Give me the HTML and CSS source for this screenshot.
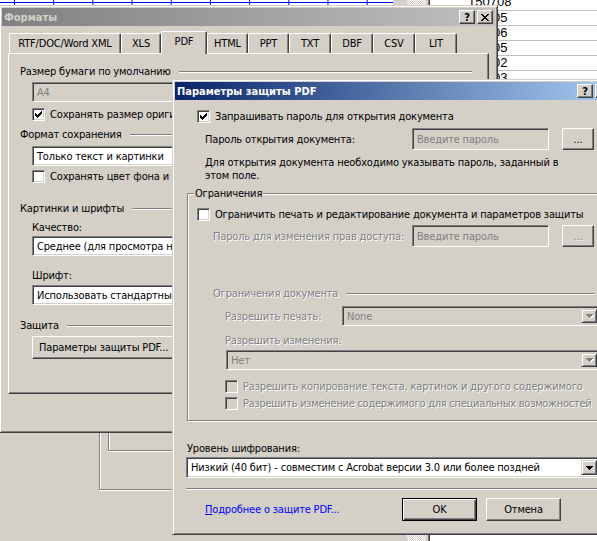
FILE: index.html
```html
<!DOCTYPE html>
<html lang="ru">
<head>
<meta charset="utf-8">
<title>Параметры защиты PDF</title>
<link rel="stylesheet" href="styles.css">
</head>
<body>
<div class="desktop">
  <div class="app">
    <div class="app-left">
      <div class="grid-strip"></div>
      <div class="frame-outer"><div class="frame-inner"></div></div>
    </div>
    <div class="app-gap"></div>
    <div class="app-dither"></div>
    <div class="app-split"></div>
    <div class="app-right">
      <div class="row row-first"><span class="cell-top">150708</span></div>
      <div class="row"><span class="cell">05</span></div>
      <div class="row"><span class="cell">06</span></div>
      <div class="row"><span class="cell">05</span></div>
      <div class="row"><span class="cell">02</span></div>
      <div class="row"><span class="cell">03</span></div>
      <div class="row"><span class="cell">04</span></div>
    </div>
  </div>

  <div class="window formats">
    <div class="titlebar inactive">
      <span class="title">Форматы</span>
      <span class="tbtn">?</span>
      <span class="tbtn"><svg width="8" height="7" viewBox="0 0 8 7"><path d="M0 0h2v1H0z M6 0h2v1H6z M1 1h2v1H1z M5 1h2v1H5z M2 2h4v1H2z M3 3h2v1H3z M2 4h4v1H2z M1 5h2v1H1z M5 5h2v1H5z M0 6h2v1H0z M6 6h2v1H6z" fill="#000"/></svg></span>
    </div>
    <div class="tabs">
      <div class="tab t-rtf">RTF/DOC/Word XML</div>
      <div class="tab t-xls">XLS</div>
      <div class="tab sel t-pdf">PDF</div>
      <div class="tab t-html">HTML</div>
      <div class="tab t-ppt">PPT</div>
      <div class="tab t-txt">TXT</div>
      <div class="tab t-dbf">DBF</div>
      <div class="tab t-csv">CSV</div>
      <div class="tab t-lit">LIT</div>
    </div>
    <div class="tabpanel">
      <div class="grp-h g1"><span>Размер бумаги по умолчанию</span><i class="etch"></i></div>
      <div class="field combo disabled fmt-field f-a4"><span class="ftext ph">A4</span><span class="dd dis-dd"><svg width="7" height="4" viewBox="0 0 7 4"><path d="M0 0h7v1H0z M1 1h5v1H1z M2 2h3v1H2z M3 3h1v1H3z"/></svg></span></div>
      <div class="chk f-r1"><span class="cb"><svg width="9" height="9" viewBox="0 0 9 9"><path d="M1 3h1v3H1z M2 4h1v3H2z M3 5h1v3H3z M4 4h1v3H4z M5 3h1v3H5z M6 2h1v3H6z M7 1h1v3H7z" fill="#000"/></svg></span><span>Сохранять размер оригинала страницы</span></div>
      <div class="grp-h g2"><span>Формат сохранения</span><i class="etch"></i></div>
      <div class="field combo white fmt-field f-fmt"><span class="ftext">Только текст и картинки</span><span class="dd"><svg width="7" height="4" viewBox="0 0 7 4"><path d="M0 0h7v1H0z M1 1h5v1H1z M2 2h3v1H2z M3 3h1v1H3z"/></svg></span></div>
      <div class="chk f-r2"><span class="cb"></span><span>Сохранять цвет фона и текста</span></div>
      <div class="grp-h g3"><span>Картинки и шрифты</span><i class="etch"></i></div>
      <div class="lbl f-lq">Качество:</div>
      <div class="field combo white fmt-field f-q"><span class="ftext">Среднее (для просмотра на экране)</span><span class="dd"><svg width="7" height="4" viewBox="0 0 7 4"><path d="M0 0h7v1H0z M1 1h5v1H1z M2 2h3v1H2z M3 3h1v1H3z"/></svg></span></div>
      <div class="lbl f-lf">Шрифт:</div>
      <div class="field combo white fmt-field f-f"><span class="ftext">Использовать стандартные шрифты</span><span class="dd"><svg width="7" height="4" viewBox="0 0 7 4"><path d="M0 0h7v1H0z M1 1h5v1H1z M2 2h3v1H2z M3 3h1v1H3z"/></svg></span></div>
      <div class="grp-h g4"><span>Защита</span><i class="etch"></i></div>
      <div class="btn f-prot">Параметры защиты PDF...</div>
    </div>
  </div>

  <div class="window pdfdlg">
    <div class="titlebar active">
      <span class="title">Параметры защиты PDF</span>
      <span class="tbtn">?</span>
      <span class="tbtn"><svg width="8" height="7" viewBox="0 0 8 7"><path d="M0 0h2v1H0z M6 0h2v1H6z M1 1h2v1H1z M5 1h2v1H5z M2 2h4v1H2z M3 3h2v1H3z M2 4h4v1H2z M1 5h2v1H1z M5 5h2v1H5z M0 6h2v1H0z M6 6h2v1H6z" fill="#000"/></svg></span>
    </div>
    <div class="chk p-ask"><span class="cb"><svg width="9" height="9" viewBox="0 0 9 9"><path d="M1 3h1v3H1z M2 4h1v3H2z M3 5h1v3H3z M4 4h1v3H4z M5 3h1v3H5z M6 2h1v3H6z M7 1h1v3H7z" fill="#000"/></svg></span><span>Запрашивать пароль для открытия документа</span></div>
    <div class="pw-row p-row1">
      <span class="pw-label">Пароль открытия документа:</span>
      <span class="field pw-field"><span class="ftext ph">Введите пароль</span></span>
      <span class="btn pw-btn">...</span>
    </div>
    <p class="p-note">Для открытия документа необходимо указывать пароль, заданный в<br>этом поле.</p>
    <fieldset class="p-grp">
      <legend>Ограничения</legend>
      <div class="chk g-cb"><span class="cb"></span><span>Ограничить печать и редактирование документа и параметров защиты</span></div>
      <div class="pw-row g-row2">
        <span class="pw-label dis">Пароль для изменения прав доступа:</span>
        <span class="field pw-field"><span class="ftext ph">Введите пароль</span></span>
        <span class="btn pw-btn dis">...</span>
      </div>
      <div class="grp-h g-doc"><span class="dis">Ограничения документа</span><i class="etch"></i></div>
      <div class="sel-row g-print">
        <span class="dis sel-label">Разрешить печать:</span>
        <span class="field combo disabled g-print-sel"><span class="ftext ph">None</span><span class="dd dis-dd"><svg width="7" height="4" viewBox="0 0 7 4"><path d="M0 0h7v1H0z M1 1h5v1H1z M2 2h3v1H2z M3 3h1v1H3z"/></svg></span></span>
      </div>
      <div class="lbl dis g-chg">Разрешить изменения:</div>
      <div class="field combo disabled g-chg-sel"><span class="ftext ph">Нет</span><span class="dd dis-dd"><svg width="7" height="4" viewBox="0 0 7 4"><path d="M0 0h7v1H0z M1 1h5v1H1z M2 2h3v1H2z M3 3h1v1H3z"/></svg></span></div>
      <div class="chk g-cb3"><span class="cb cb-dis"></span><span class="dis">Разрешить копирование текста, картинок и другого содержимого</span></div>
      <div class="chk g-cb4"><span class="cb cb-dis"></span><span class="dis tight">Разрешить изменение содержимого для специальных возможностей</span></div>
    </fieldset>
    <div class="lbl p-enc-lbl">Уровень шифрования:</div>
    <div class="field combo white p-enc"><span class="ftext">Низкий (40 бит) - совместим с Acrobat версии 3.0 или более поздней</span><span class="dd"><svg width="7" height="4" viewBox="0 0 7 4"><path d="M0 0h7v1H0z M1 1h5v1H1z M2 2h3v1H2z M3 3h1v1H3z"/></svg></span></div>
    <div class="etch p-sep"></div>
    <div class="p-bottom">
      <a class="p-link" href="#"><u>П</u>одробнее о защите PDF...</a>
      <span class="btn default">OK</span>
      <span class="btn">Отмена</span>
    </div>
  </div>
</div>
</body>
</html>
```

FILE: styles.css
```css
* { box-sizing: border-box; }
html, body { margin: 0; padding: 0; }
body {
  width: 597px;
  height: 541px;
  overflow: hidden;
  background: #d4d0c8;
  font-family: "DejaVu Sans Condensed", "DejaVu Sans", sans-serif;
  font-stretch: condensed;
  font-size: 11px;
  line-height: 13px;
  letter-spacing: -0.17px;
  color: #000;
}
.desktop {
  position: relative;
  width: 597px;
  height: 541px;
  overflow: hidden;
  background: #d4d0c8;
}

/* background application */
.app {
  position: absolute;
  left: 0; top: 0;
  width: 597px; height: 541px;
  display: flex;
}
.app-left { width: 393px; display: flex; flex-direction: column; }
.grid-strip {
  height: 5px;
  background-color: #fff;
  background-image:
    linear-gradient(#0000ff, #0000ff),
    linear-gradient(to right, #0000ff 1px, transparent 1px);
  background-size: 100% 1px, 39.2px 100%;
  background-position: 0 2px, 14px 0;
  background-repeat: no-repeat, repeat-x;
}
.frame-outer {
  margin-top: 415px;
  margin-left: 99px;
  height: 70px;
  border-left: 1px solid #808080;
  border-bottom: 1px solid #808080;
  box-shadow: inset 1px 0 #fff, 0 1px #fff;
  padding-left: 8px;
}
.frame-inner {
  height: 31px;
  border-left: 1px solid #808080;
  border-bottom: 1px solid #808080;
  box-shadow: inset 1px 0 #fff, 0 1px #fff;
}
.app-gap { width: 14px; background: #d4d0c8; }
.app-dither {
  width: 19px;
  background-color: #d4d0c8;
  background-image: conic-gradient(#fff 25%, transparent 0 50%, #fff 0 75%, transparent 0);
  background-size: 2px 2px;
}
.app-split { width: 4px; border-left: 2px solid #d4d0c8; border-right: 1px solid #404040; background: #808080; }
.app-right { flex: 1; background: #fff; display: flex; flex-direction: column; font-family: "Liberation Sans", sans-serif; font-size: 13px; letter-spacing: 0; }
.row { height: 15px; border-bottom: 1px solid #c0c0c0; line-height: 14px; padding-left: 63px; }
.row-first { height: 11px; line-height: 3px; padding-left: 38px; }

/* windows */
.window {
  position: absolute;
  background: #d4d0c8;
  border: 1px solid;
  border-color: #d4d0c8 #404040 #404040 #d4d0c8;
  box-shadow: inset 1px 1px #fff, inset -1px -1px #808080;
  padding: 2px;
  display: flex;
  flex-direction: column;
}
.formats { left: -1px; top: 5px; width: 499px; height: 428px; }
.pdfdlg { left: 172px; top: 79px; width: 444px; height: 456px; }

.titlebar {
  height: 18px;
  flex: none;
  display: flex;
  align-items: center;
  padding: 0 2px;
  font-weight: bold;
  letter-spacing: 0;
}
.titlebar.inactive { background: linear-gradient(to right, #808080, #c0c0c0); color: #d4d0c8; }
.titlebar.active { background: linear-gradient(to right, #0a246a, #a6caf0); color: #fff; }
.title { flex: 1; white-space: nowrap; }
.tbtn {
  width: 16px; height: 14px;
  display: flex; align-items: center; justify-content: center;
  color: #000;
  font-family: "DejaVu Sans", sans-serif;
  font-size: 11px;
  font-weight: bold;
  background: #d4d0c8;
  border: 1px solid;
  border-color: #fff #404040 #404040 #fff;
  box-shadow: inset -1px -1px #808080;
}
.tbtn + .tbtn { margin-left: 2px; }

/* generic controls */
.etch { display: block; height: 2px; border-top: 1px solid #808080; border-bottom: 1px solid #fff; }
.grp-h { display: flex; align-items: center; height: 13px; white-space: nowrap; }
.grp-h .etch { flex: 1; margin-left: 8px; }
.dis { color: #808080; text-shadow: 1px 1px 0 #fff; }
.tight { letter-spacing: -0.27px; }

.field {
  display: flex;
  align-items: center;
  height: 22px;
  background: #d4d0c8;
  border: 1px solid;
  border-color: #808080 #fff #fff #808080;
  box-shadow: inset 1px 1px #404040, inset -1px -1px #d4d0c8;
  padding: 2px;
  white-space: nowrap;
  overflow: hidden;
}
.field.white { background: #fff; }
.ftext { flex: 1; padding-left: 2px; overflow: hidden; }
.ph { color: #808080; }
.dd {
  width: 16px;
  align-self: stretch;
  display: flex; align-items: center; justify-content: center;
  background: #d4d0c8;
  border: 1px solid;
  border-color: #d4d0c8 #404040 #404040 #d4d0c8;
  box-shadow: inset 1px 1px #fff, inset -1px -1px #808080;
}
.dd svg { display: block; fill: #000; }
.dis-dd svg { fill: #808080; filter: drop-shadow(1px 1px 0 #fff); }

.chk { display: flex; align-items: center; height: 13px; white-space: nowrap; }
.cb {
  flex: none;
  width: 13px; height: 13px;
  margin-right: 5px;
  background: #fff;
  border: 1px solid;
  border-color: #808080 #fff #fff #808080;
  box-shadow: inset 1px 1px #404040, inset -1px -1px #d4d0c8;
  padding: 1px;
}
.cb svg { display: block; }
.cb-dis { background: #d4d0c8; }

.btn {
  display: flex; align-items: center; justify-content: center;
  background: #d4d0c8;
  border: 1px solid;
  border-color: #fff #404040 #404040 #fff;
  box-shadow: inset -1px -1px #808080;
  white-space: nowrap;
}
.btn.default {
  border-color: #000;
  box-shadow: inset 1px 1px #fff, inset -1px -1px #404040, inset -2px -2px #808080;
}
.lbl { white-space: nowrap; }

/* Formats window */
.tabs {
  display: flex;
  align-items: flex-end;
  height: 22px;
  margin: 5px 6px 0;
  padding-left: 1px;
  position: relative;
  z-index: 1;
  flex: none;
}
.tab {
  height: 20px;
  padding-top: 3px;
  text-align: center;
  white-space: nowrap;
  background: #d4d0c8;
  border-top: 1px solid #fff;
  border-left: 1px solid #fff;
  border-right: 1px solid #404040;
  box-shadow: inset -1px 0 #808080;
  border-radius: 2px 2px 0 0;
}
.tab.sel { height: 23px; margin-bottom: -1px; padding-top: 3px; }
.t-rtf { width: 112px; }
.t-xls { width: 40px; }
.t-pdf { width: 46px; }
.t-html { width: 41px; }
.t-ppt { width: 41px; }
.t-txt { width: 42px; }
.t-dbf { width: 42px; }
.t-csv { width: 42px; }
.t-lit { width: 42px; }

.tabpanel {
  margin: 0 6px;
  height: 341px;
  flex: none;
  border: 1px solid;
  border-color: #fff #404040 #404040 #fff;
  box-shadow: inset -1px -1px #808080;
  display: flex;
  flex-direction: column;
}
.tabpanel .grp-h { padding: 0 16px 0 11px; }
.fmt-field { margin-left: 23px; width: 440px; height: 20px; flex: none; }
.g1 { margin-top: 11px; }
.f-a4 { margin-top: 4px; }
.f-r1 { margin-top: 6px; margin-left: 23px; }
.g2 { margin-top: 7px; }
.f-fmt { margin-top: 5px; }
.f-r2 { margin-top: 4px; margin-left: 23px; }
.g3 { margin-top: 19px; }
.f-lq { margin-top: 6px; margin-left: 23px; }
.f-q { margin-top: 2px; }
.f-lf { margin-top: 13px; margin-left: 23px; }
.f-f { margin-top: 3px; }
.g4 { margin-top: 14px; }
.f-prot { margin-top: 4px; margin-left: 23px; width: 146px; height: 23px; justify-content: flex-start; padding-left: 6px; }

/* PDF dialog */
.p-ask { margin-top: 10px; margin-left: 22px; }
.pw-row { display: flex; align-items: center; height: 22px; white-space: nowrap; }
.pw-label { flex: 1; }
.pw-field { width: 137px; flex: none; }
.pw-btn { width: 32px; height: 22px; margin-left: 13px; flex: none; }
.p-row1 { margin-top: 5px; padding: 0 19px 0 30px; }
.p-note { margin: 6px 0 0 0; padding-left: 30px; white-space: nowrap; }

.p-grp {
  margin: 5px 5px 0 12px;
  padding: 8px 7px 10px 0;
  min-width: 0;
  border: 1px solid #808080;
  box-shadow: inset 1px 1px #fff, 1px 1px #fff;
}
.p-grp legend {
  margin-left: 6px;
  padding: 0 1px;
  background: #d4d0c8;
  line-height: 13px;
}
.g-cb { margin-left: 9px; }
.g-row2 { margin-top: 4px; padding: 0 6px 0 25px; }
.g-doc { margin-top: 40px; padding: 0 6px 0 25px; }
.sel-row { display: flex; align-items: center; white-space: nowrap; }
.sel-label { flex: 1; }
.g-print { margin-top: 6px; padding-left: 37px; }
.g-print-sel { width: 258px; height: 20px; flex: none; }
.g-chg { margin-top: 8px; margin-left: 37px; }
.g-chg-sel { margin-top: 3px; margin-left: 38px; height: 20px; }
.g-cb3 { margin-top: 10px; margin-left: 37px; }
.g-cb4 { margin-top: 4px; margin-left: 37px; }

.p-enc-lbl { margin-top: 21px; margin-left: 12px; }
.p-enc { margin-top: 2px; margin-left: 11px; width: 414px; height: 21px; flex: none; }
.p-sep { margin-top: 10px; margin-left: 11px; flex: none; }
.p-bottom { display: flex; align-items: center; margin-top: 8px; padding: 0 52px 0 30px; height: 23px; }
.p-link { flex: 1; color: #0000ff; text-decoration: none; white-space: nowrap; }
.p-bottom .btn { width: 75px; height: 23px; }
.p-bottom .btn + .btn { margin-left: 9px; }
```
